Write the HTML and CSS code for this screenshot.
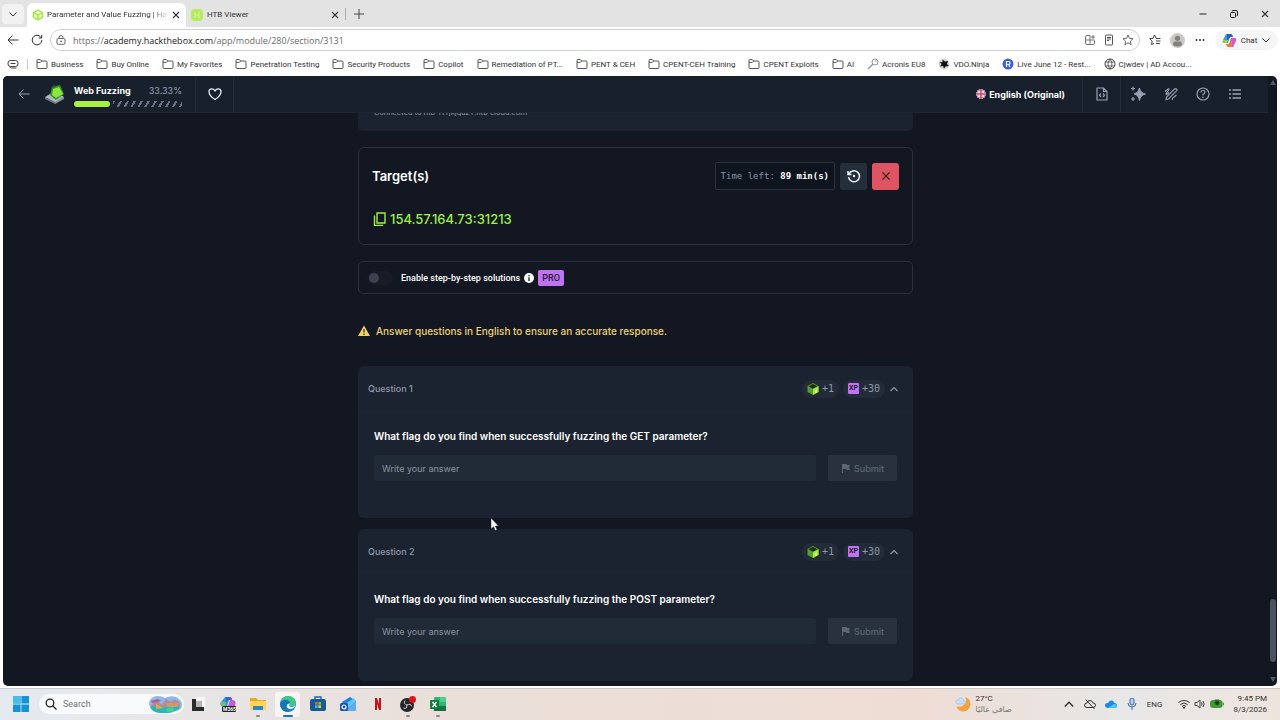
FILE: index.html
```
<!DOCTYPE html>
<html lang="en">
<head>
    <meta charset="UTF-8">
    <meta name="viewport" content="width=device-width, initial-scale=1.0">
    <title>Parameter and Value Fuzzing | Hack The Box Academy</title>
    <link rel="stylesheet" href="styles.css">
</head>
<body>
    <!-- shared icons -->
    <svg class="sprite" aria-hidden="true">
        <symbol id="folder" viewBox="0 0 12 12"><path d="M1 9.500V2.500q0-1 1-1h2.300l1.400 1.500H10q1 0 1 1v5.500q0 1-1 1H2q-1 0-1-1zM1 4.400h3.300L5.700 3" fill="none" stroke="#444" stroke-width=".9"/></symbol>
        <symbol id="close" viewBox="0 0 10 10"><path d="M2 2l6 6M8 2l-6 6" fill="none" stroke="currentColor" stroke-width="1.100"/></symbol>
        <symbol id="down" viewBox="0 0 10 10"><path d="M1.500 3.500L5 7l3.500-3.500" fill="none" stroke="currentColor"/></symbol>
        <symbol id="up" viewBox="0 0 10 10"><path d="M1.500 7L5 3.500 8.500 7" fill="none" stroke="currentColor" stroke-width="1.200"/></symbol>
        <symbol id="back" viewBox="0 0 12 12"><path d="M11.500 6H1M5.500 1.500L1 6l4.500 4.500" fill="none" stroke="currentColor"/></symbol>
        <symbol id="htb" viewBox="0 0 12 12"><path d="M6 1l4.500 2.500v5L6 11 1.500 8.500v-5zM1.500 3.500L6 6l4.500-2.500M6 6v5" fill="#e6fbc0" stroke="#9fe83a" stroke-width="1.400" stroke-linejoin="round"/></symbol>
        <symbol id="cube" viewBox="0 0 12 12"><path d="M6 0l5.500 3v6L6 12 .5 9V3z" fill="#5c9b35"/><path d="M6 1l4.500 2.300L6 5.700 1.500 3.300z" fill="#16301c"/><path d="M11.500 3.300L6 6v6l5.500-3z" fill="#9fef2a"/><path d="M8 7.500l2-1v2.500l-2 1z" fill="#e8ffb0"/></symbol>
        <symbol id="flag" viewBox="0 0 10 10"><path d="M1 1h4.500l.5 1h3l-1 2.500L9 7H5.500L5 6H2v4H1z" fill="currentColor"/></symbol>
    </svg>

    <header class="browser">
        <div class="tab-strip">
            <button class="tab-menu" aria-label="Tab actions"><svg class="i10"><use href="#down"/></svg></button>
            <div class="tab active">
                <svg class="i12"><use href="#htb"/></svg>
                <span class="tab-title fade">Parameter and Value Fuzzing | Hac</span>
                <button aria-label="Close tab"><svg class="i10"><use href="#close"/></svg></button>
            </div>
            <div class="tab">
                <svg class="i12"><rect width="12" height="12" rx="4" fill="#b5ec5b"/><path d="M4 3v6M8 3v6M4 6h4" stroke="#d7f7a2" fill="none"/></svg>
                <span class="tab-title">HTB Viewer</span>
                <button aria-label="Close tab"><svg class="i10"><use href="#close"/></svg></button>
            </div>
            <button class="new-tab" aria-label="New tab"><svg class="i12" viewBox="0 0 12 12"><path d="M6 1v10M1 6h10" stroke="#444" fill="none"/></svg></button>
            <div class="window-buttons">
                <button aria-label="Minimize"><svg class="i10" viewBox="0 0 10 10"><path d="M1.500 5h7" stroke="#222"/></svg></button>
                <button aria-label="Restore"><svg class="i10" viewBox="0 0 10 10"><path d="M3 2.500Q3 1.500 4 1.500h3q1.500 0 1.500 1.500v3q0 1-1 1" stroke="#222" fill="none"/><rect x="1.500" y="3.500" width="5" height="5" rx="1" stroke="#222" fill="none"/></svg></button>
                <button aria-label="Close"><svg class="i10"><use href="#close"/></svg></button>
            </div>
        </div>

        <div class="toolbar">
            <button aria-label="Back"><svg class="i12"><use href="#back"/></svg></button>
            <button class="reload" aria-label="Reload"><svg class="i12" viewBox="0 0 12 12"><path d="M10.800 6A4.800 4.800 0 1 1 9 2.300L10.600 4M10.700 1v3H7.700" stroke="#333" fill="none"/></svg></button>
            <div class="address">
                <svg class="i10" viewBox="0 0 10 10"><rect x="1" y="3.500" width="8" height="5.800" rx="1.200" stroke="#555" fill="none" stroke-width=".9"/><path d="M3 3.500V2.500a2 2 0 0 1 4 0v1" stroke="#555" fill="none" stroke-width=".9"/><circle cx="5" cy="6.400" r=".8" fill="#555"/></svg>
                <div class="url" role="textbox" aria-label="Address">https://<b>academy.hackthebox.com</b>/app/module/280/section/3131</div>
                <svg class="i12" viewBox="0 0 12 12"><path d="M6 1.500H3q-1.500 0-1.500 1.500v6q0 1.500 1.500 1.500h6q1.500 0 1.500-1.500V6.500M1.500 6h9M6 1.500v9M9 1v4M7 3h4" stroke="#666" fill="none" stroke-width=".9"/></svg>
                <svg class="i12" viewBox="0 0 12 12"><rect x="2.500" y="1" width="7" height="10" rx="1" stroke="#555" fill="none"/><path d="M4 3.500h4M4 5h4M4 6.500h2" stroke="#555"/></svg>
                <svg class="i12" viewBox="0 0 12 12"><path d="M6 1l1.500 3.300 3.500.4-2.600 2.400.7 3.500L6 8.900l-3.100 1.700.7-3.500L1 4.700l3.500-.4z" stroke="#666" fill="none"/></svg>
            </div>
            <svg class="i12" viewBox="0 0 12 12"><path d="M7 4L5.500 1 4 4.300l-3.300.4 2.500 2.400-.7 3.500L5 9.300M7 4.500h4.500M7 7h4.500M7 9.500h4" stroke="#444" fill="none"/></svg>
            <svg class="avatar" viewBox="0 0 15 15"><circle cx="7.500" cy="7.500" r="7.500" fill="#cbc9c7"/><circle cx="7.500" cy="5.300" r="2.600" fill="#84807d"/><path d="M3 12q0-3.500 2-3.500h5q2 0 2 3.500-4.500 3-9 0" fill="#84807d"/></svg>
            <button class="more" aria-label="Settings"><svg class="i12" viewBox="0 0 12 12"><circle cx="2.500" cy="6" r="1" fill="#333"/><circle cx="6" cy="6" r="1" fill="#333"/><circle cx="9.500" cy="6" r="1" fill="#333"/></svg></button>
            <button class="chat">
                <svg class="i15" viewBox="0 0 15 15"><path d="M4 1h5l-3 9H2Q0 10 1 7z" fill="#28a5dc"/><path d="M5 1h4q1.500 0 2 3H8L5 8z" fill="#3156cf"/><path d="M1 7h5l-1 3H2Q0 10 1 7z" fill="#a8c944"/><path d="M11 14H6l3-9h4q2 0 1 3z" fill="#d05bcb"/><path d="M10 14H6q-1.500 0-2-3h3l3-4z" fill="#ee783f"/></svg>
                Chat
                <svg class="i10"><use href="#down"/></svg>
            </button>
        </div>

        <nav class="bookmarks">
            <svg class="i12" viewBox="0 0 12 12"><rect x="1" y="2.500" width="10" height="6" rx="2.500" stroke="#444" fill="none"/><path d="M3.500 5.500h5M3 8.500q0 1.500 1.500 1.500h5" stroke="#444" fill="none"/></svg>
            <span class="bar"></span>
            <a href="#"><svg class="i12"><use href="#folder"/></svg>Business</a>
            <a href="#"><svg class="i12"><use href="#folder"/></svg>Buy Online</a>
            <a href="#"><svg class="i12"><use href="#folder"/></svg>My Favorites</a>
            <a href="#"><svg class="i12"><use href="#folder"/></svg>Penetration Testing</a>
            <a href="#"><svg class="i12"><use href="#folder"/></svg>Security Products</a>
            <a href="#"><svg class="i12"><use href="#folder"/></svg>Copilot</a>
            <a href="#"><svg class="i12"><use href="#folder"/></svg>Remediation of PT...</a>
            <a href="#"><svg class="i12"><use href="#folder"/></svg>PENT &amp; CEH</a>
            <a href="#"><svg class="i12"><use href="#folder"/></svg>CPENT-CEH Training</a>
            <a href="#"><svg class="i12"><use href="#folder"/></svg>CPENT Exploits</a>
            <a href="#"><svg class="i12"><use href="#folder"/></svg>AI</a>
            <a href="#"><svg class="i12" viewBox="0 0 12 12"><circle cx="8" cy="4" r="3" stroke="#8b96b4" fill="none"/><path d="M6 6L1 11" stroke="#8b96b4" stroke-width="1.500"/><circle cx="9" cy="3" r=".8" fill="#8b96b4"/></svg>Acronis EU8</a>
            <a href="#"><svg class="i12" viewBox="0 0 12 12"><circle cx="6" cy="6" r="5.500" fill="#d6d6d6"/><path d="M4.500 1.500L7 3.500l3-.5-1 3 2 2-3.500.5-1.500 2L5 8l-3 .5L3.500 6 1.500 4l3 .2z" fill="#111"/></svg>VDO.Ninja</a>
            <a href="#"><svg class="i12" viewBox="0 0 12 12"><circle cx="6" cy="6" r="5.500" fill="#3c62db"/><path d="M4.500 9V3.500h2a1.500 1.500 0 0 1 0 3h-2M6.500 6.500L8 9" stroke="#fff" fill="none" stroke-width="1.200"/></svg>Live June 12 - Rest...</a>
            <a href="#"><svg class="i12" viewBox="0 0 12 12"><circle cx="6" cy="6" r="5" stroke="#444" fill="none"/><path d="M1.500 4h9M1.500 8h9M6 1Q2 6 6 11M6 1q4 5 0 10" stroke="#444" fill="none" stroke-width=".8"/></svg>Cjwdev | AD Accou...</a>
        </nav>
    </header>

    <div class="viewport">
        <div class="page">
            <header class="module-bar">
                <a class="module-back" href="#" aria-label="Back to module"><svg class="i12"><use href="#back"/></svg></a>
                <svg class="module-logo" viewBox="0 0 20 20"><path d="M0 13l10-6 9 6-9 6z" fill="#a9b8ba"/><path d="M0 13l10 5v2L0 15z" fill="#64777c"/><path d="M10 18l9-5v2l-9 5z" fill="#829398"/><path d="M7 3l8-2 4 9-8 6-6-5z" fill="#3a8c2b"/><path d="M8 5l6-2 4 7-7 4-4-3z" fill="#8be63a"/><path d="M6 3l3-2 2 1-3 2z" fill="#24552b"/></svg>
                <div class="module-info">
                    <div class="module-title"><strong>Web Fuzzing</strong><span>33.33%</span></div>
                    <div class="progress"><div class="progress-done" style="width: 33.33%"></div><div class="progress-rest"></div></div>
                </div>
                <button class="like" aria-label="Add to favourites"><svg class="i14" viewBox="0 0 14 14"><path d="M7 12.500Q1 8.500 1 4.700 1 1.800 3.700 1.800 5.800 1.800 7 3.800 8.200 1.800 10.300 1.800 13 1.800 13 4.700 13 8.500 7 12.500z" stroke="#e8edf5" fill="none" stroke-width="1.300"/></svg></button>
                <button class="language">
                    <svg class="i10" viewBox="0 0 10 10"><circle cx="5" cy="5" r="5" fill="#3a3f87"/><path d="M1.500 1.500l7 7M8.500 1.500l-7 7" stroke="#f0dfe6" stroke-width="1.600"/><path d="M5 0v10M0 5h10" stroke="#fff" stroke-width="3"/><path d="M5 0v10M0 5h10" stroke="#d93a57" stroke-width="1.600"/></svg>
                    English (Original)
                </button>
                <button class="resource" aria-label="Resources"><svg class="i14" viewBox="0 0 14 14"><path d="M2 1h6.500L12 4.500V13H2zM8.500 1v3.500H12M6 6.500L4.500 8.200 6 10M8 6.500l1.500 1.700L8 10" stroke="currentColor" fill="none" stroke-width="1.200"/></svg></button>
                <div class="tools">
                    <button aria-label="AI assistant"><svg class="i16" viewBox="0 0 16 16"><path d="M9.500 2q.8 5 6 6-5.200 1-6 6.500Q8.700 9 4 8q4.700-1 5.500-6z" fill="currentColor" stroke="currentColor"/><path d="M3 .5v4M1 2.500h4M3 11v4M1 13h4" stroke="currentColor" stroke-width="1.200"/></svg></button>
                    <button aria-label="Notes"><svg class="i14" viewBox="0 0 14 14"><path d="M1 4.500L4 2q1.500-.7 1 .8L2 6.500q-.3 1.300 1 .7L5 5.500M2 12.500l.5-2.500L10.500 2q1-.8 2 0t0 2L4.500 12zM8.500 12.800q-.8-1 1-2.300l3-2.500" stroke="currentColor" fill="none" stroke-width="1.100"/></svg></button>
                    <button aria-label="Help"><svg class="i14" viewBox="0 0 14 14"><circle cx="7" cy="7" r="6" stroke="currentColor" fill="none" stroke-width="1.200"/><path d="M5 5.500Q5 3.500 7 3.500t2 1.800Q9 6.500 7 7.200V8.500" stroke="currentColor" fill="none" stroke-width="1.200"/><circle cx="7" cy="10.200" r=".8" fill="currentColor"/></svg></button>
                    <button aria-label="Table of contents"><svg class="i14" viewBox="0 0 14 14"><path d="M1 3h2M1 7h2M1 11h2M4.500 3H13M4.500 7H13M4.500 11H13" stroke="currentColor" stroke-width="1.400"/></svg></button>
                </div>
            </header>

            <div class="scroller">
                <main class="content">
                    <section class="connection">Connected to htb-1t1jkjqaz1.htb-cloud.com</section>

                    <section class="target">
                        <div class="target-head">
                            <h2>Target(s)</h2>
                            <div class="time-left">Time left: <b>89 min(s)</b></div>
                            <button class="reset" aria-label="Reset target"><svg class="i14" viewBox="0 0 14 14"><path d="M1 2v3.500h3.500M1.800 5.300A5.500 5.500 0 1 1 1.500 8" stroke="#eef2f8" fill="none" stroke-width="1.500"/><circle cx="7" cy="7" r="1.200" fill="#eef2f8"/></svg></button>
                            <button class="stop" aria-label="Terminate target"><svg class="i12"><use href="#close"/></svg></button>
                        </div>
                        <button class="target-ip">
                            <svg class="i14" viewBox="0 0 14 14"><path d="M5 1h8v10H5zM2.500 3.500v10H11" stroke="currentColor" fill="none" stroke-width="1.400"/></svg>
                            154.57.164.73:31213
                        </button>
                    </section>

                    <section class="solutions">
                        <input type="checkbox" id="solutions" disabled>
                        <label for="solutions">Enable step-by-step solutions</label>
                        <svg class="i10" viewBox="0 0 10 10"><circle cx="5" cy="5" r="5" fill="#fff"/><path d="M5 4.300V8M5 2v1.300" stroke="#151a25" stroke-width="1.300"/></svg>
                        <span class="pro">PRO</span>
                    </section>

                    <p class="notice">
                        <svg class="i12" viewBox="0 0 12 12"><path d="M6 .5L12 11H0z" fill="#f0d264"/><path d="M6 4v3.500M6 8.500V10" stroke="#3a3420" stroke-width="1.200"/></svg>
                        Answer questions in English to ensure an accurate response.
                    </p>

                    <form class="question">
                        <div class="question-head">
                            <h3>Question 1</h3>
                            <span class="reward"><svg class="i12"><use href="#cube"/></svg>+1</span>
                            <span class="reward"><span class="xp">XP</span>+30</span>
                            <button type="button" aria-label="Collapse"><svg class="i10"><use href="#up"/></svg></button>
                        </div>
                        <div class="question-body">
                            <label for="answer1">What flag do you find when successfully fuzzing the GET parameter?</label>
                            <div class="answer">
                                <input type="text" id="answer1" placeholder="Write your answer">
                                <button disabled><svg class="i10"><use href="#flag"/></svg>Submit</button>
                            </div>
                        </div>
                    </form>

                    <form class="question">
                        <div class="question-head">
                            <h3>Question 2</h3>
                            <span class="reward"><svg class="i12"><use href="#cube"/></svg>+1</span>
                            <span class="reward"><span class="xp">XP</span>+30</span>
                            <button type="button" aria-label="Collapse"><svg class="i10"><use href="#up"/></svg></button>
                        </div>
                        <div class="question-body">
                            <label for="answer2">What flag do you find when successfully fuzzing the POST parameter?</label>
                            <div class="answer">
                                <input type="text" id="answer2" placeholder="Write your answer">
                                <button disabled><svg class="i10"><use href="#flag"/></svg>Submit</button>
                            </div>
                        </div>
                    </form>
                </main>
            </div>
        </div>
        <div class="scrollbar">
            <svg viewBox="0 0 6 5"><path d="M0 5l3-5 3 5z" fill="#525866"/></svg>
            <div class="thumb"></div>
            <svg viewBox="0 0 6 5"><path d="M0 0l3 5 3-5z" fill="#525866"/></svg>
        </div>
    </div>

    <footer class="taskbar">
        <button aria-label="Start"><svg class="i16" viewBox="0 0 16 16"><path d="M0 0h7.600v7.600H0zM8.400 0H16v7.600H8.400zM0 8.400h7.600V16H0zM8.400 8.400H16V16H8.400z" fill="#1593d8"/><path d="M0 0h7.600v7.600H0z" fill="#48bde9"/></svg></button>
        <div class="search">
            <svg class="i12" viewBox="0 0 12 12"><circle cx="5" cy="5" r="3.800" stroke="#222" fill="none" stroke-width="1.300"/><path d="M8 8l3.500 3.500" stroke="#222" stroke-width="1.300"/></svg>
            <input type="text" placeholder="Search" aria-label="Search">
            <svg class="search-art" viewBox="0 0 33 17"><path d="M8 0q5 0 8 2 6-3 11-1 6 3 6 8t-6 6q-6 3-13 2-6 0-9-3Q0 12 0 7q1-6 8-7z" fill="#8bb8e8"/><path d="M2 9l6-5 5 5 4-6 5 3 4-3 5 4-1 6H3z" fill="#b88a91"/><path d="M1 11q8-3 14 0l16-1q-1 4-6 5-6 3-13 2-6 0-9-3z" fill="#27b6b8"/><path d="M18 7h11v4H18z" fill="#d9956b"/><path d="M7 8l8 4-8 1z" fill="#eda642"/><path d="M17 13l7-2 1 4-7 1z" fill="#38d894"/><path d="M2 5l7-2 3 2-9 2z" fill="#b85791"/></svg>
        </div>
        <div class="apps">
            <button aria-label="Task view"><svg viewBox="0 0 16 16"><path d="M6 1h9v10H6z" fill="#f6f6f6"/><path d="M2 3h4v8h8v4H2z" fill="#2a2a2a"/><path d="M6 5h6v6H6z" fill="#b5b5b5"/></svg></button>
            <button aria-label="Microsoft 365"><svg viewBox="0 0 16 16"><path d="M5 1h5L7 10H2q-3-1-1-4z" fill="#2b9fdb"/><path d="M6 1h4q2 0 2 3H8L5 8z" fill="#4061cd"/><path d="M1 6h5l-1 4H2q-2-1-1-4z" fill="#70c36c"/><path d="M8 10l2-6h3q4 1 2 6z" fill="#c25ed1"/><rect x="2" y="10" width="14" height="6" rx="1" fill="#222"/><text x="3" y="15" font-size="5" font-weight="bold" fill="#fff" font-family="Roboto">M365</text></svg></button>
            <button class="open" aria-label="File Explorer"><svg viewBox="0 0 16 16"><path d="M0 2h6l2 2h8v10H0z" fill="#e9a820"/><path d="M0 5h16v9H0z" fill="#ffd458"/><path d="M3 10h10v4H3z" fill="#2b87c8"/></svg></button>
            <button class="open current" aria-label="Edge"><svg viewBox="0 0 16 16"><circle cx="8" cy="8" r="8" fill="#1686cd"/><path d="M1 5Q5-1 10 .3q6 2 6 7-1 3-5 3-3-1-1-3 0-3-4-3-4 0-5 3z" fill="#40c985"/><path d="M0 8q2-5 7-4 3 1 3 3.500Q5 7 6 12q1 3 4 3.700Q1 17 0 8z" fill="#1677b7"/><path d="M10 7.500q-2 3 1 3.500 3 0 4.500-2-1 4-5.500 4-4-1-3-4 1-2 3-1.500z" fill="#eef8fc"/></svg></button>
            <button aria-label="Microsoft Store"><svg viewBox="0 0 16 16"><path d="M5 4V1h6v3" stroke="#1a6aa9" fill="none" stroke-width="1.400"/><rect y="3" width="16" height="12" rx="2" fill="#145b93"/><path d="M5 6h2.700v2.700H5z" fill="#f05a3c"/><path d="M8.300 6H11v2.700H8.300z" fill="#7cc442"/><path d="M5 9.300h2.700V12H5z" fill="#38b5ec"/><path d="M8.300 9.300H11V12H8.300z" fill="#fbc834"/></svg></button>
            <button aria-label="Outlook"><svg viewBox="0 0 16 16"><path d="M2 6l8-5 6 4v8q0 2-2 2H4z" fill="#1f7fe0"/><path d="M5 8l9-6 2 4-8 6z" fill="#5cc6f4"/><path d="M7 13l9-7v8q0 1-2 1H6z" fill="#66a9f0"/><rect y="7" width="8" height="8" rx="1.500" fill="#1257b3"/><circle cx="4" cy="11" r="2" stroke="#fff" fill="none" stroke-width="1.200"/></svg></button>
            <button aria-label="Netflix"><svg viewBox="0 0 16 16"><path d="M5 2h2l2 6V2h2v12H9L7 8v6H5z" fill="#c8101c"/></svg></button>
            <button class="open" aria-label="OBS Studio"><svg viewBox="0 0 16 16"><circle cx="7" cy="9" r="7" fill="#25252b"/><path d="M7 9Q3 8 5 4.500M7 9q4-2 4.500 1.500M7 9q0 4.500-3.500 3" stroke="#ccc" fill="none"/><circle cx="12.500" cy="3.500" r="3.500" fill="#e3131b"/></svg></button>
            <button class="open" aria-label="Excel"><svg viewBox="0 0 16 16"><rect x="4" y="1" width="12" height="14" rx="1" fill="#2fb673"/><path d="M10 1h6v5h-6z" fill="#4cd08a"/><path d="M4 10h12v5H4z" fill="#17703f"/><rect y="4" width="9" height="9" rx="1" fill="#107c41"/><path d="M2.500 6l4 5M6.500 6l-4 5" stroke="#fff" stroke-width="1.300"/></svg></button>
        </div>
        <div class="weather">
            <svg class="i16" viewBox="0 0 16 16"><path d="M10 1q6 2 5.500 8-2 7-8 6.500-5-1-6-5 5 1 8-2t.5-7.500z" fill="#f0a33b"/><path d="M2 8q-2-1-1-3 1-1 2-1 1-3 4-2 2 1 2 3 2 0 1 3z" fill="#c7def7" stroke="#8ab2e0" stroke-width=".5"/></svg>
            <div>27°C<br><span lang="ar" dir="rtl">صافي غالبًا</span></div>
        </div>
        <div class="tray">
            <svg class="i12" viewBox="0 0 10 10"><use href="#up"/></svg>
            <svg class="i12" viewBox="0 0 12 12"><path d="M3 9.500Q.5 9.500.5 7.300T3 5q.5-2.500 3-2.500T9 5q2.500 0 2.500 2.200T9 9.500zM1.500 1.500l9 9.500" stroke="#333" fill="none"/></svg>
            <svg class="i12" viewBox="0 0 12 12"><path d="M3 10Q0 10 0 7.300T3 5q1-3 4-2.500 2 .5 2.500 2.500 2.500 0 2.500 2.500T9.500 10z" fill="#1c8be6"/><path d="M3 10l6-4q3 0 3 2t-2.500 2z" fill="#4cc6f8"/></svg>
            <svg class="i12" viewBox="0 0 12 12"><rect x="4" y="0" width="4" height="7" rx="2" stroke="#3a6bb0" fill="#b9cfea"/><path d="M2 5q0 4 4 4t4-4M6 9v3" stroke="#3a6bb0" fill="none"/></svg>
            <span>ENG</span>
            <div class="status">
                <svg class="i12" viewBox="0 0 12 12"><path d="M.5 4.500q5.500-4 11 0M2.300 6.500q3.700-3 7.400 0M4 8.300q2-1.500 4 0" stroke="#333" fill="none"/><circle cx="6" cy="9.800" r="1" fill="#333"/></svg>
                <svg class="i12" viewBox="0 0 12 12"><path d="M1 4.500h2L6 2v8L3 7.500H1zM7.500 4.300q1.300 1.700 0 3.400M9 3q2.300 3 0 6" stroke="#444" fill="none"/></svg>
                <svg class="battery" viewBox="0 0 14 10"><rect x="0" y="1" width="12.500" height="8" rx="3" fill="#3f9c35"/><path d="M13 3.500q1 1.500 0 3" stroke="#3f7c35" fill="none"/><path d="M6 0v3M8 0v3M5 3h4q0 3-2 3T5 3" fill="#163d14" stroke="#163d14" stroke-width=".8"/></svg>
            </div>
            <div class="clock">9:45 PM<br>8/3/2026</div>
        </div>
    </footer>

    <svg class="cursor" viewBox="0 0 9 13"><path d="M1 0v11l2.500-2.300L5.300 12.500l1.700-.8L5.300 8H8.500z" fill="#fff" stroke="#222" stroke-width=".5"/></svg>
</body>
</html>
```
FILE: styles.css
```
* {
    box-sizing: border-box;
}
body {
    margin: 0;
    height: 100vh;
    display: flex;
    flex-direction: column;
    overflow: hidden;
    background: #fff;
    color: #333;
    font-family: Roboto, "Open Sans", sans-serif;
    font-size: 8px;
}
button {
    display: flex;
    align-items: center;
    justify-content: center;
    padding: 0;
    border: none;
    background: none;
    color: inherit;
    font: inherit;
}
input {
    min-width: 0;
    border: none;
    outline: none;
    background: none;
    font: inherit;
}
a {
    color: inherit;
    text-decoration: none;
}
svg {
    flex: none;
}
.sprite {
    display: none;
}
.i10 {
    width: 10px;
    height: 10px;
}
.i12 {
    width: 12px;
    height: 12px;
}
.i14 {
    width: 14px;
    height: 14px;
}
.i15 {
    width: 15px;
    height: 15px;
}
.i16 {
    width: 16px;
    height: 16px;
}

/* browser */
.tab-strip {
    display: flex;
    align-items: center;
    height: 27px;
    background: #e3e3e3;
}
.tab-menu {
    width: 22px;
    height: 20px;
    margin: 0 3px 0 2px;
    border-radius: 4px;
    background: #f1f1f1;
}
.tab {
    display: flex;
    align-items: center;
    gap: 4px;
    width: 159px;
    height: 24px;
    padding: 0 5px 1px;
    align-self: flex-end;
}
.tab.active {
    gap: 3px;
    background: #fff;
    border-radius: 6px 6px 0 0;
}
.tab-title {
    flex: 1;
    min-width: 0;
    overflow: hidden;
    white-space: nowrap;
}
.fade {
    mask-image: linear-gradient(to right, #000 88%, transparent);
}
.new-tab {
    height: 12px;
    padding-left: 7px;
    border-left: 1px solid #aaa;
}
.window-buttons {
    display: flex;
    gap: 21px;
    margin-left: auto;
    padding-right: 10px;
}
.toolbar {
    display: flex;
    align-items: center;
    gap: 9px;
    height: 26px;
    padding: 0 2px 0 7px;
}
.reload {
    margin-left: 3px;
}
.address {
    display: flex;
    align-items: center;
    gap: 7px;
    flex: 1;
    height: 22px;
    margin-left: -2px;
    padding: 0 5px;
    border: 1px solid #d2d2d2;
    border-radius: 11px;
}
.url {
    flex: 1;
    font-family: "Open Sans", sans-serif;
    font-size: 9px;
    color: #6b6b6b;
}
.url b {
    font-weight: 400;
    color: #222;
}
.avatar {
    width: 15px;
    height: 15px;
}
.chat {
    gap: 4px;
    width: 63px;
    height: 20px;
    border-radius: 10px;
    background: #f5f5f5;
}
.bookmarks {
    display: flex;
    align-items: center;
    gap: 13px;
    height: 23px;
    padding: 0 7px 1px;
    white-space: nowrap;
}
.bookmarks a {
    display: flex;
    align-items: center;
    gap: 3px;
}
.bar {
    width: 1px;
    height: 11px;
    margin: 0 -5px;
    background: #ccc;
}

/* site */
.viewport {
    display: flex;
    flex: 1;
    min-height: 0;
    margin: 0 3px 2px;
    border-radius: 5px;
    overflow: hidden;
    background: #121722;
    color: #fff;
    font-family: Inter, sans-serif;
}
.page {
    display: flex;
    flex-direction: column;
    flex: 1;
    min-width: 0;
}
.module-bar {
    display: flex;
    align-items: center;
    flex: none;
    height: 37px;
    padding-left: 15px;
    background: #18202b;
    border-bottom: 1px solid #1f2733;
    color: #97a1b3;
}
.module-back {
    display: flex;
}
.module-logo {
    width: 20px;
    height: 20px;
    margin: 0 9px 0 15px;
}
.module-info {
    width: 108px;
    margin-right: 13px;
    padding-top: 3px;
}
.module-title {
    display: flex;
    justify-content: space-between;
    line-height: 12px;
    font-size: 9px;
}
.module-title strong {
    color: #fff;
}
.progress {
    display: flex;
    gap: 3px;
    height: 6px;
    margin-top: 4px;
}
.progress-done {
    border-radius: 3px;
    background: #a9f03f;
}
.progress-rest {
    flex: 1;
    background: repeating-linear-gradient(120deg, #667082 0 2px, transparent 2px 6px);
}
.like,
.resource {
    width: 39px;
    height: 100%;
    border: 1px solid #252d39;
    border-width: 0 1px;
}
.language {
    gap: 3px;
    margin-left: auto;
    margin-right: 17px;
    color: #fff;
    font-size: 9px;
    font-weight: 700;
}
.tools {
    display: flex;
    align-items: center;
    gap: 18px;
    padding: 0 26px 0 9px;
}
.scroller {
    flex: 1;
    min-height: 0;
    overflow: hidden;
}
.content {
    max-width: 555px;
    margin: -22px auto 0;
}
.connection {
    padding: 16px 16px 12px;
    margin-bottom: 16px;
    border-radius: 5px;
    background: #1b2330;
    color: #8790a1;
    font-family: Roboto, sans-serif;
    font-size: 8px;
    line-height: 12px;
}
.target {
    padding: 14px 13px 15px;
    margin-bottom: 16px;
    border: 1px solid #2c323d;
    border-radius: 6px;
}
.target-head {
    display: flex;
    align-items: center;
    gap: 5px;
    margin-bottom: 19px;
}
.target h2 {
    flex: 1;
    margin: 0;
    font-size: 13px;
    font-weight: 600;
}
.time-left {
    padding: 0 5px;
    border: 1px solid #2c323d;
    border-radius: 2px;
    background: #0f151f;
    color: #8790a8;
    font-family: "DejaVu Sans Mono", monospace;
    font-size: 9px;
    line-height: 26px;
}
.time-left b {
    color: #fff;
}
.reset,
.stop {
    width: 27px;
    height: 27px;
    border-radius: 3px;
}
.reset {
    background: #252f3b;
}
.stop {
    background: #dd5563;
    color: #43141c;
}
.target-ip {
    gap: 4px;
    color: #9fef45;
    font-size: 13px;
    font-weight: 500;
    line-height: 20px;
}
.solutions {
    display: flex;
    align-items: center;
    gap: 4px;
    height: 33px;
    padding: 0 8px;
    border: 1px solid #2c323d;
    border-radius: 5px;
    font-family: Roboto, sans-serif;
    font-size: 9px;
    font-weight: 500;
}
.solutions input {
    appearance: none;
    width: 26px;
    height: 14px;
    margin: 0 4px 0 0;
    padding: 2px;
    border-radius: 7px;
    background: #171c27;
}
.solutions input::before {
    content: "";
    display: block;
    width: 10px;
    height: 10px;
    border-radius: 5px;
    background: #3c4250;
}
.pro {
    padding: 0 4px;
    border-radius: 2px;
    background: #bd74ee;
    color: #2a1838;
    line-height: 16px;
}
.notice {
    display: flex;
    align-items: center;
    gap: 6px;
    margin: 29px 0 27px;
    color: #ecd373;
    font-size: 10px;
    font-weight: 500;
    line-height: 16px;
}
.question {
    margin-bottom: 11px;
    border-radius: 6px;
    background: #1b2330;
}
.question-head {
    display: flex;
    align-items: center;
    gap: 4px;
    height: 45px;
    padding: 1px 14px 0 10px;
    border-bottom: 1px solid #1e2835;
    color: #8e98a9;
}
.question h3 {
    flex: 1;
    margin: 0;
    font-size: 9px;
    font-weight: 500;
}
.reward {
    display: flex;
    align-items: center;
    gap: 3px;
    padding: 0 5px;
    border-radius: 9px;
    background: #222b37;
    font-family: "DejaVu Sans Mono", monospace;
    font-size: 10px;
    line-height: 18px;
}
.xp {
    width: 11px;
    border-radius: 1px;
    background: #bd74ee;
    color: #2a1838;
    font-family: Roboto, sans-serif;
    font-size: 7px;
    font-weight: 700;
    line-height: 11px;
    text-align: center;
}
.question-body {
    padding: 17px 16px 37px;
}
.question label {
    display: block;
    margin-bottom: 11px;
    font-size: 10px;
    font-weight: 600;
    line-height: 16px;
}
.answer {
    display: flex;
    gap: 12px;
    height: 26px;
}
.answer input {
    flex: 1;
    padding: 0 8px;
    border-radius: 3px;
    background: #212b37;
    color: #fff;
    font-size: 9px;
}
.answer input::placeholder {
    color: #8993a3;
}
.answer button {
    gap: 3px;
    width: 69px;
    border-radius: 2px;
    background: #28313d;
    color: #5c6675;
    font-size: 9px;
    font-weight: 500;
}
.scrollbar {
    display: flex;
    flex-direction: column;
    align-items: center;
    width: 9px;
    padding: 4px 0;
}
.scrollbar svg {
    width: 6px;
    height: 5px;
}
.thumb {
    width: 6px;
    height: 63px;
    margin: auto 0 15px;
    border-radius: 3px;
    background: #4b5260;
}

/* taskbar */
.taskbar {
    display: flex;
    align-items: center;
    height: 32px;
    padding: 0 13px 1px;
    border-top: 1px solid #c9c9cc;
    background: linear-gradient(to right, #e5eaf0, #eadfd9 35%, #eeddd5 72%, #e7e7e7 88%, #eee4de);
}
.search {
    display: flex;
    align-items: center;
    gap: 4px;
    width: 145px;
    height: 20px;
    margin: 0 1px 0 10px;
    padding: 0 2px 0 6px;
    border-radius: 10px;
    background: #f8fafc;
}
.search input {
    flex: 1;
    font-size: 9px;
}
.search-art {
    width: 33px;
    height: 17px;
}
.apps {
    display: flex;
    gap: 5px;
}
.apps button {
    position: relative;
    width: 25px;
    height: 25px;
    border-radius: 3px;
}
.apps svg {
    width: 16px;
    height: 16px;
}
.apps .current {
    background: #f8f4f1;
}
.open::after {
    content: "";
    position: absolute;
    bottom: 0;
    width: 4px;
    height: 2px;
    border-radius: 1px;
    background: #888;
}
.current::after {
    width: 10px;
    background: #1478c8;
}
.weather {
    display: flex;
    align-items: center;
    gap: 5px;
    margin-left: auto;
    line-height: 11px;
}
.weather span {
    color: #777;
    font-family: "DejaVu Sans", sans-serif;
}
.tray {
    display: flex;
    align-items: center;
    gap: 9px;
    margin-left: 51px;
}
.status {
    display: flex;
    align-items: center;
    gap: 4px;
    margin-left: 7px;
}
.battery {
    width: 14px;
    height: 10px;
}
.clock {
    text-align: right;
    line-height: 11px;
}

.cursor {
    position: absolute;
    left: 490px;
    top: 518px;
    width: 9px;
    height: 13px;
}
```
